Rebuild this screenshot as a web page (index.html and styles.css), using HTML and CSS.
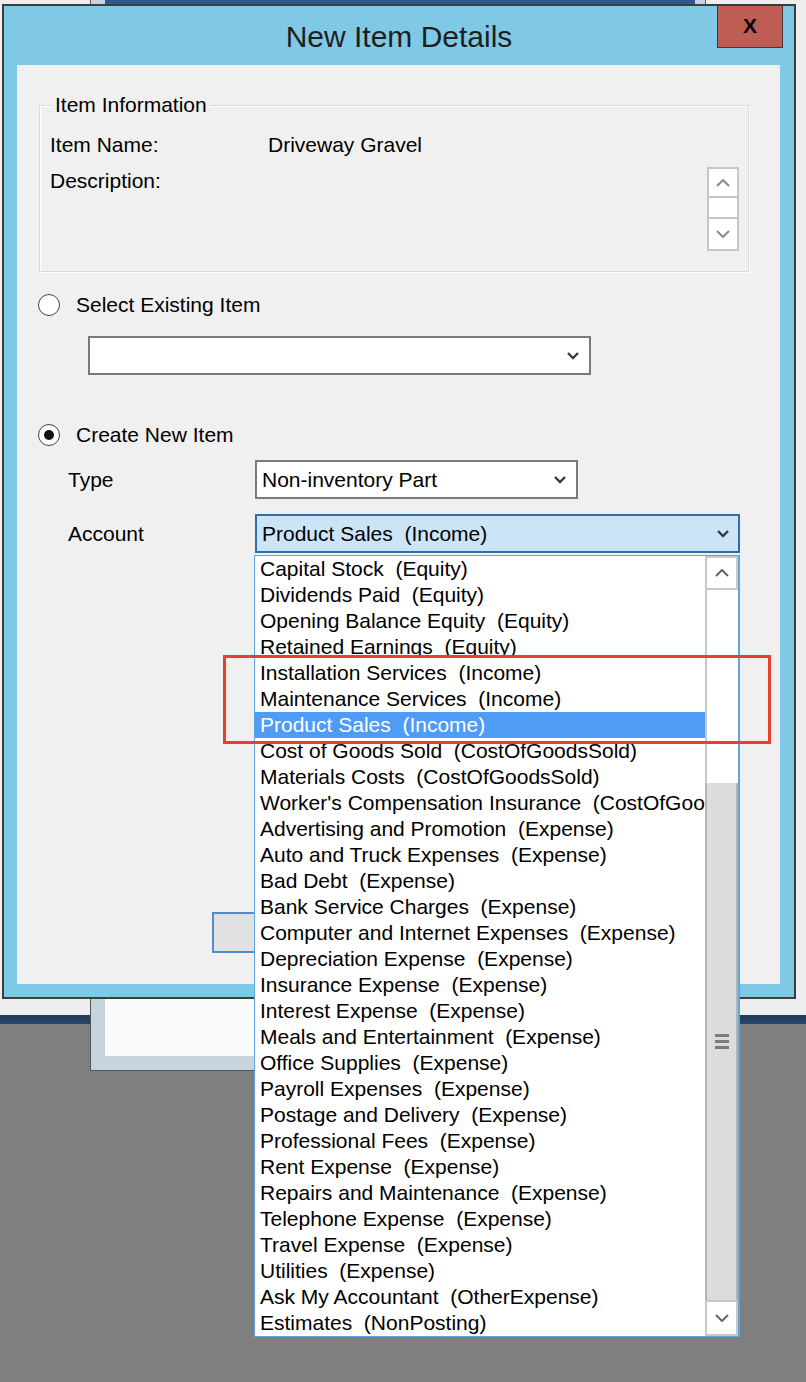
FILE: index.html
```html
<!DOCTYPE html>
<html>
<head>
<meta charset="utf-8">
<title>New Item Details</title>
<link rel="stylesheet" href="styles.css">
</head>
<body>
<div class="desktop">
  <div class="back-window">
    <div class="back-title"></div>
    <div class="back-body"></div>
  </div>

  <div class="dialog">
    <div class="titlebar">
      <span class="tb-spacer"></span>
      <div class="title">New Item Details</div>
      <div class="close">X</div>
    </div>
    <div class="content">
      <div class="group">
        <span class="legend">Item Information</span>
        <div class="info-row"><span class="info-label">Item Name:</span><span>Driveway Gravel</span></div>
        <div class="info-row desc-row">
          <span class="info-label">Description:</span>
          <div class="spinner">
            <div class="spin-up"><svg width="14" height="8" viewBox="0 0 14 8"><polyline points="1,7 7,1 13,7" fill="none" stroke="#8a8a8a" stroke-width="2"/></svg></div>
            <div class="spin-mid"></div>
            <div class="spin-down"><svg width="14" height="8" viewBox="0 0 14 8"><polyline points="1,1 7,7 13,1" fill="none" stroke="#8a8a8a" stroke-width="2"/></svg></div>
          </div>
        </div>
      </div>

      <div class="radio-row first-radio"><span class="radio"></span><span class="radio-text">Select Existing Item</span></div>
      <div class="combo existing">
        <span class="combo-text"></span>
        <svg class="chev" width="12" height="8" viewBox="0 0 12 8"><polyline points="1,1 6,6 11,1" fill="none" stroke="#3a3a3a" stroke-width="2.4"/></svg>
      </div>

      <div class="radio-row second-radio"><span class="radio checked"></span><span class="radio-text">Create New Item</span></div>

      <div class="field-row type-row">
        <span class="field-label">Type</span>
        <div class="combo type-combo">
          <span class="combo-text">Non-inventory Part</span>
          <svg class="chev" width="12" height="8" viewBox="0 0 12 8"><polyline points="1,1 6,6 11,1" fill="none" stroke="#3a3a3a" stroke-width="2.4"/></svg>
        </div>
      </div>
      <div class="field-row account-row">
        <span class="field-label">Account</span>
        <div class="combo account-combo">
          <span class="combo-text">Product Sales&nbsp; (Income)</span>
          <svg class="chev" width="12" height="8" viewBox="0 0 12 8"><polyline points="1,1 6,6 11,1" fill="none" stroke="#3a3a3a" stroke-width="2.4"/></svg>
        </div>
      </div>

      <div class="ok-button"></div>
    </div>
  </div>

  <div class="dropdown">
    <ul class="items">
      <li>Capital Stock&nbsp; (Equity)</li>
      <li>Dividends Paid&nbsp; (Equity)</li>
      <li>Opening Balance Equity&nbsp; (Equity)</li>
      <li>Retained Earnings&nbsp; (Equity)</li>
      <li>Installation Services&nbsp; (Income)</li>
      <li>Maintenance Services&nbsp; (Income)</li>
      <li class="selected">Product Sales&nbsp; (Income)</li>
      <li>Cost of Goods Sold&nbsp; (CostOfGoodsSold)</li>
      <li>Materials Costs&nbsp; (CostOfGoodsSold)</li>
      <li>Worker's Compensation Insurance&nbsp; (CostOfGoodsSold)</li>
      <li>Advertising and Promotion&nbsp; (Expense)</li>
      <li>Auto and Truck Expenses&nbsp; (Expense)</li>
      <li>Bad Debt&nbsp; (Expense)</li>
      <li>Bank Service Charges&nbsp; (Expense)</li>
      <li>Computer and Internet Expenses&nbsp; (Expense)</li>
      <li>Depreciation Expense&nbsp; (Expense)</li>
      <li>Insurance Expense&nbsp; (Expense)</li>
      <li>Interest Expense&nbsp; (Expense)</li>
      <li>Meals and Entertainment&nbsp; (Expense)</li>
      <li>Office Supplies&nbsp; (Expense)</li>
      <li>Payroll Expenses&nbsp; (Expense)</li>
      <li>Postage and Delivery&nbsp; (Expense)</li>
      <li>Professional Fees&nbsp; (Expense)</li>
      <li>Rent Expense&nbsp; (Expense)</li>
      <li>Repairs and Maintenance&nbsp; (Expense)</li>
      <li>Telephone Expense&nbsp; (Expense)</li>
      <li>Travel Expense&nbsp; (Expense)</li>
      <li>Utilities&nbsp; (Expense)</li>
      <li>Ask My Accountant&nbsp; (OtherExpense)</li>
      <li>Estimates&nbsp; (NonPosting)</li>
    </ul>
    <div class="scrollbar">
      <div class="sb-btn sb-up"><svg width="14" height="8" viewBox="0 0 14 8"><polyline points="1,7 7,1 13,7" fill="none" stroke="#666" stroke-width="2"/></svg></div>
      <div class="sb-track"></div>
      <div class="sb-thumb">
        <div class="grip"><span></span><span></span><span></span></div>
      </div>
      <div class="sb-btn sb-down"><svg width="14" height="8" viewBox="0 0 14 8"><polyline points="1,1 7,7 13,1" fill="none" stroke="#666" stroke-width="2"/></svg></div>
    </div>
  </div>

  <div class="annotation"></div>
</div>
</body>
</html>
```

FILE: styles.css
```css
* { box-sizing: border-box; }

html, body {
  margin: 0;
  padding: 0;
}

body {
  width: 806px;
  height: 1382px;
  overflow: hidden;
  font-family: "Liberation Sans", Arial, sans-serif;
  font-size: 21px;
  color: #000;
}

.desktop {
  position: relative;
  width: 806px;
  height: 1382px;
  overflow: hidden;
  background: linear-gradient(to bottom, #efefef 0, #efefef 1015px, #1f3a5b 1015px, #2a4667 1024px, #7f7f7f 1024px, #7f7f7f 100%);
}

/* window behind the dialog */
.back-window {
  position: absolute;
  left: 90px;
  top: -10px;
  width: 616px;
  height: 1081px;
  border: 1px solid #555;
  background: #c6d4dd;
  padding: 0 10px 14px 14px;
  display: flex;
  flex-direction: column;
}
.back-title {
  height: 15px;
  background: #2d5a8e;
}
.back-body {
  flex: 1;
  background: #fafafa;
}

/* dialog */
.dialog {
  position: absolute;
  left: 2px;
  top: 4px;
  width: 794px;
  height: 995px;
  border: 2px solid #3e3e3e;
  background: #7fc9e7;
  padding: 0 14px 13px 13px;
  display: flex;
  flex-direction: column;
}

.titlebar {
  height: 59px;
  margin: 0 -14px 0 -13px;
  display: grid;
  grid-template-columns: 1fr auto 1fr;
  align-items: start;
}
.title {
  font-size: 30px;
  line-height: 30px;
  margin-top: 16px;
  color: #1e1e1e;
}
.close {
  justify-self: end;
  margin-right: 11px;
  margin-top: -1px;
  width: 66px;
  height: 43px;
  background: #bd5d53;
  border: 1px solid #4a3432;
  font-weight: bold;
  font-size: 21px;
  line-height: 40px;
  text-align: center;
  color: #000;
}

.content {
  flex: 1;
  background: #f0f0f0;
  display: flex;
  flex-direction: column;
  align-items: flex-start;
}

/* group box */
.group {
  position: relative;
  margin-top: 40px;
  margin-left: 22px;
  width: 710px;
  height: 167px;
  border: 1px solid #d3dce2;
  box-shadow: 1px 1px 0 #ffffff, inset 1px 1px 0 #ffffff;
  padding: 27px 9px 0 10px;
  display: flex;
  flex-direction: column;
  gap: 12px;
}
.legend {
  position: absolute;
  top: -13px;
  left: 12px;
  padding: 0 3px;
  line-height: 24px;
  background: #f0f0f0;
}
.info-row {
  display: flex;
  align-items: flex-start;
  line-height: 24px;
}
.info-label {
  width: 218px;
}
.spinner {
  margin-left: auto;
  margin-top: -2px;
  width: 32px;
  height: 84px;
  border: 2px solid #c6c6c6;
  background: #fff;
  display: flex;
  flex-direction: column;
}
.spin-up, .spin-down {
  display: flex;
  align-items: center;
  justify-content: center;
}
.spin-up { height: 29px; border-bottom: 2px solid #c6c6c6; }
.spin-mid { height: 21px; border-bottom: 2px solid #c6c6c6; }
.spin-down { flex: 1; }

/* radios */
.radio-row {
  display: flex;
  align-items: center;
  height: 24px;
  margin-left: 21px;
}
.first-radio { margin-top: 21px; }
.second-radio { margin-top: 48px; }
.radio {
  width: 22px;
  height: 22px;
  border-radius: 50%;
  border: 1.5px solid #444;
  background: #fff;
  display: flex;
  align-items: center;
  justify-content: center;
  flex: none;
}
.radio.checked::after {
  content: "";
  width: 10px;
  height: 10px;
  border-radius: 50%;
  background: #111;
}
.radio-text {
  margin-left: 16px;
  line-height: 24px;
}

/* combos */
.combo {
  display: flex;
  align-items: center;
  height: 39px;
  border: 2px solid #7a7a7a;
  background: #fff;
  padding: 0 10px 0 5px;
}
.combo-text {
  white-space: nowrap;
  line-height: 24px;
}
.chev {
  margin-left: auto;
  flex: none;
}
.existing {
  margin-top: 19px;
  margin-left: 71px;
  width: 503px;
}

.field-row {
  display: flex;
  align-items: center;
  height: 39px;
}
.type-row { margin-top: 13px; }
.account-row { margin-top: 15px; }
.field-label {
  width: 238px;
  padding-left: 51px;
  line-height: 24px;
}
.type-combo { width: 323px; }
.account-combo {
  width: 485px;
  background: #cce4f7;
  border-color: #2f6ea8;
  padding-right: 9px;
}

.ok-button {
  margin-top: 359px;
  margin-left: 195px;
  width: 150px;
  height: 41px;
  background: #e1e1e1;
  border: 2px solid #4f8cc9;
}

/* dropdown list */
.dropdown {
  position: absolute;
  left: 254px;
  top: 555px;
  width: 486px;
  height: 782px;
  border: 1px solid #5ba8dc;
  border-right-width: 2px;
  background: #fff;
  display: flex;
}
.items {
  list-style: none;
  margin: 0;
  padding: 0;
  flex: 1;
  min-width: 0;
  overflow: hidden;
}
.items li {
  height: 26px;
  line-height: 26px;
  padding-left: 5px;
  white-space: nowrap;
  overflow: hidden;
}
.items li.selected {
  background: #4e9cf5;
  color: #fff;
}

.scrollbar {
  width: 33px;
  flex: none;
  display: flex;
  flex-direction: column;
}
.sb-btn {
  display: flex;
  align-items: center;
  justify-content: center;
  background: #fff;
  border: 2px solid #c8c8c8;
}
.sb-up { height: 34px; }
.sb-down { height: 36px; }
.sb-track {
  height: 193px;
  border-left: 2px solid #c8c8c8;
  background: #fff;
}
.sb-thumb {
  height: 517px;
  background: #dcdcdc;
  border-left: 2px solid #b4b4b4;
  border-right: 2px solid #b4b4b4;
  display: flex;
  align-items: center;
  justify-content: center;
}
.grip {
  display: flex;
  flex-direction: column;
  gap: 3px;
}
.grip span {
  display: block;
  width: 14px;
  height: 3px;
  background: #7c7c7c;
}

/* red annotation rectangle */
.annotation {
  position: absolute;
  left: 223px;
  top: 655px;
  width: 548px;
  height: 89px;
  border: 3px solid #e8402a;
}
```
